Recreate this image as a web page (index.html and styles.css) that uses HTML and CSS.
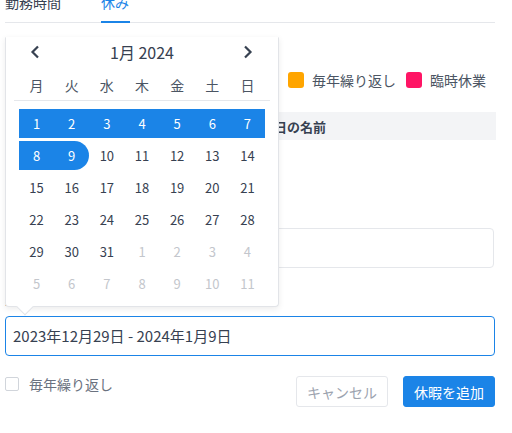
FILE: index.html
```html
<!DOCTYPE html>
<html lang="ja">
<head>
<meta charset="utf-8">
<link rel="stylesheet" href="styles.css">
</head>
<body>
<div class="page">
  <div class="tabs">
    <div class="tab">勤務時間</div>
    <div class="tab active">休み</div>
  </div>

  <div class="legend">
    <div class="legend-item"><span class="swatch holiday"></span>祝日</div>
    <div class="legend-item"><span class="swatch yearly"></span>毎年繰り返し</div>
    <div class="legend-item"><span class="swatch temp"></span>臨時休業</div>
  </div>

  <div class="table-head">
    <div class="th th-date">日付</div>
    <div class="th th-name">休日の名前</div>
  </div>

  <div class="field field-name">
    <label class="field-label">名前</label>
    <div class="input"></div>
  </div>

  <div class="field field-date">
    <label class="field-label">期間</label>
    <div class="input focused">2023年12月29日 - 2024年1月9日</div>
  </div>

  <div class="actions">
    <label class="check"><span class="box"></span>毎年繰り返し</label>
    <div class="buttons">
      <button class="btn btn-cancel">キャンセル</button>
      <button class="btn btn-primary">休暇を追加</button>
    </div>
  </div>

  <div class="picker">
    <div class="picker-head">
      <span class="nav"><svg width="10" height="14" viewBox="0 0 10 14"><path d="M8 1.5 L2.5 7 L8 12.5" fill="none" stroke="#374151" stroke-width="2.2"/></svg></span>
      <span class="title">1月 2024</span>
      <span class="nav"><svg width="10" height="14" viewBox="0 0 10 14"><path d="M2 1.5 L7.5 7 L2 12.5" fill="none" stroke="#374151" stroke-width="2.2"/></svg></span>
    </div>
    <div class="weekdays">
      <div class="grid">
        <span>月</span><span>火</span><span>水</span><span>木</span><span>金</span><span>土</span><span>日</span>
      </div>
    </div>
    <div class="grid days">
      <span class="in">1</span><span class="in">2</span><span class="in">3</span><span class="in">4</span><span class="in">5</span><span class="in">6</span><span class="in">7</span>
      <span class="in">8</span><span class="in end">9</span><span>10</span><span>11</span><span>12</span><span>13</span><span>14</span>
      <span>15</span><span>16</span><span>17</span><span>18</span><span>19</span><span>20</span><span>21</span>
      <span>22</span><span>23</span><span>24</span><span>25</span><span>26</span><span>27</span><span>28</span>
      <span>29</span><span>30</span><span>31</span><span class="out">1</span><span class="out">2</span><span class="out">3</span><span class="out">4</span>
      <span class="out">5</span><span class="out">6</span><span class="out">7</span><span class="out">8</span><span class="out">9</span><span class="out">10</span><span class="out">11</span>
    </div>
    <div class="arrow"></div>
  </div>
</div>
</body>
</html>
```

FILE: styles.css
```css
* { box-sizing: border-box; }
html, body { margin: 0; padding: 0; background: #fff; }
body {
  font-family: "Noto Sans CJK JP", "Noto Sans", sans-serif;
  color: #374151;
  width: 512px;
  height: 433px;
  overflow: hidden;
}
.page {
  position: relative;
  margin-left: 5px;
  width: 490px;
  padding-top: 1px;
}
.tabs {
  display: flex;
  gap: 40px;
  margin-top: -9px;
  border-bottom: 1px solid #e5e7eb;
  height: 31px;
}
.tab {
  font-size: 14px;
  line-height: 20px;
  color: #374151;
  height: 31px;
}
.tab.active {
  color: #1b84e7;
  border-bottom: 2px solid #1b84e7;
  width: 29px;
}
.legend {
  display: flex;
  justify-content: flex-end;
  gap: 10px;
  padding-right: 9px;
  margin-top: 48px;
  height: 18px;
}
.legend-item {
  display: flex;
  align-items: center;
  gap: 8px;
  font-size: 14px;
  line-height: 18px;
  color: #4b5563;
}
.swatch {
  width: 16px;
  height: 16px;
  border-radius: 3px;
  display: inline-block;
}
.swatch.holiday { background: #22c55e; }
.swatch.yearly { background: #ffa500; }
.swatch.temp { background: #ff1565; }
.table-head {
  display: flex;
  margin-top: 23px;
  height: 28px;
  background: #f3f4f6;
  width: 491px;
  align-items: center;
}
.th {
  font-size: 13px;
  font-weight: 700;
  color: #374151;
}
.th-date { width: 256px; padding-left: 12px; }
.field-label {
  display: block;
  font-size: 13px;
  line-height: 18px;
  color: #374151;
}
.field-name { margin-top: 60px; }
.field-name .input { margin-top: 10px; width: 489px; }
.input {
  height: 40px;
  border: 1px solid #e5e7eb;
  border-radius: 4px;
  font-size: 15px;
  line-height: 38px;
  padding-left: 7px;
  color: #374151;
}
.field-date { margin-top: 25px; }
.field-date .field-label { font-size: 12px; line-height: 14px; }
.field-date .input { margin-top: 9px; }
.input.focused { border-color: #1b84e7; }
.actions {
  display: flex;
  justify-content: space-between;
  align-items: flex-start;
  margin-top: 20px;
}
.check {
  display: flex;
  align-items: center;
  gap: 10px;
  font-size: 14px;
  line-height: 16px;
  color: #6b7280;
}
.box {
  width: 14px;
  height: 14px;
  border: 1px solid #d1d5db;
  border-radius: 2px;
  background: #fff;
}
.buttons { display: flex; gap: 15px; }
.btn {
  width: 92px;
  height: 31px;
  border-radius: 3px;
  font-family: inherit;
  font-size: 14px;
  padding: 0;
}
.btn-cancel {
  background: #fff;
  border: 1px solid #e5e7eb;
  color: #9ca3af;
}
.btn-primary {
  background: #1b84e7;
  border: 1px solid #1b84e7;
  color: #fff;
}

/* date picker popup */
.picker {
  position: absolute;
  left: 0;
  top: 37px;
  width: 274px;
  height: 270px;
  background: #fff;
  border: 1px solid #e2e4e8;
  border-top-color: #fff;
  border-radius: 0 0 4px 4px;
  box-shadow: 0 2px 6px rgba(0, 0, 0, 0.08);
  padding: 0 8px 8px 8px;
}
.picker-head {
  display: grid;
  grid-template-columns: 35px 1fr 35px;
  align-items: center;
  height: 33px;
  padding: 0 5px;
  margin-top: -3px;
}
.nav { display: flex; justify-content: center; align-items: center; }
.nav svg { display: block; }
.picker-head .nav:first-child { justify-content: flex-start; padding-left: 11px; }
.title {
  text-align: center;
  font-size: 16px;
  color: #374151;
}
.weekdays {
  border-bottom: 1px solid #e5e7eb;
  margin-top: 2px;
  margin-bottom: 8px;
}
.weekdays .grid { height: 30px; align-items: center; }
.weekdays span {
  text-align: center;
  font-size: 14px;
  color: #4b5563;
}
.grid {
  display: grid;
  grid-template-columns: repeat(7, 1fr);
  padding: 0 5px;
}
.days { row-gap: 3px; }
.days span {
  height: 29px;
  line-height: 29px;
  text-align: center;
  font-size: 13px;
  color: #374151;
}
.days span.in { background: #1b84e7; color: #fff; }
.days span.end { border-radius: 0 15px 15px 0; }
.days span.out { color: #c3c6cc; }
.arrow {
  position: absolute;
  left: 13px;
  bottom: -7px;
  width: 12px;
  height: 12px;
  background: #fff;
  border-right: 1px solid #e2e4e8;
  border-bottom: 1px solid #e2e4e8;
  transform: rotate(45deg);
}
```
